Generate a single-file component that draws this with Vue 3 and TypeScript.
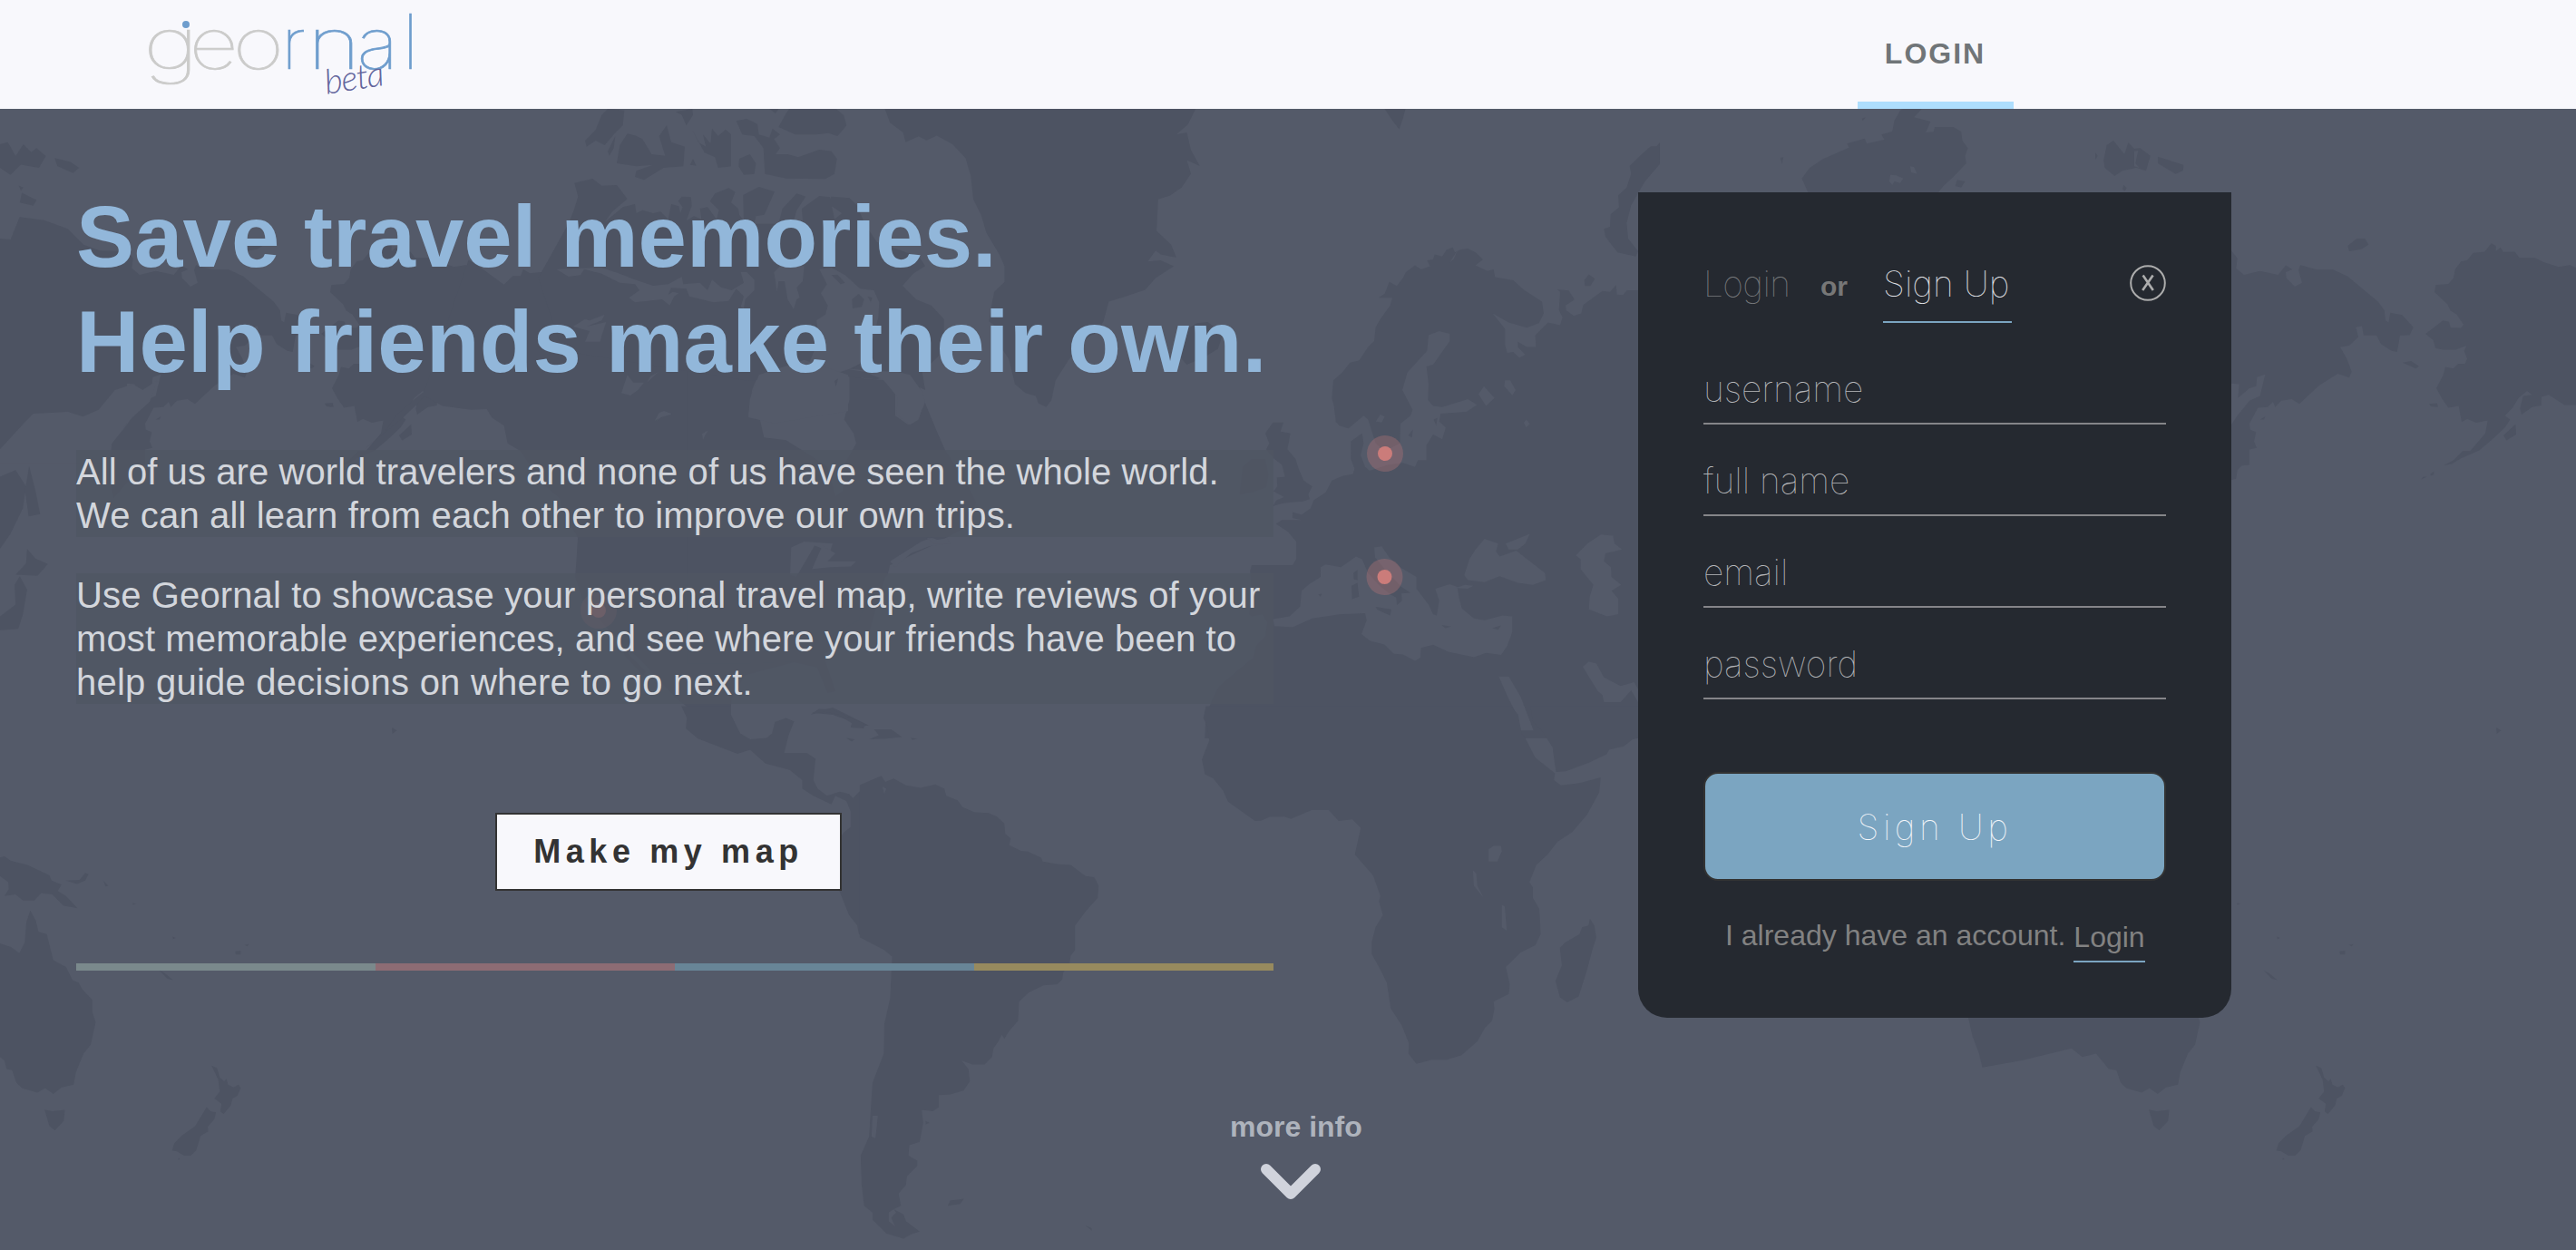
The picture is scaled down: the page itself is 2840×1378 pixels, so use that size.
<script setup lang="ts">
interface Field { name: string; type: string }
interface Patch { id: string; transform: string; land?: string[]; sea?: string[] }
interface Pin { x: number; y: number }
interface Letter { ch: string; x: number; sx: number; sy: number; fill: string }

const fields: Field[] = [
  { name: 'username', type: 'text' },
  { name: 'full name', type: 'text' },
  { name: 'email', type: 'text' },
  { name: 'password', type: 'text' },
]

const letters: Letter[] = [
  { ch: 'g', x: 158, sx: 1.33, sy: 1, fill: '#cbcbca' },
  { ch: 'e', x: 208.5, sx: 1.2, sy: 1, fill: '#cbcbca' },
  { ch: 'o', x: 256.5, sx: 1.24, sy: 1, fill: '#cbcbca' },
  { ch: 'r', x: 310, sx: 1.05, sy: 1, fill: '#6e9dcd' },
  { ch: 'n', x: 339, sx: 1.27, sy: 1, fill: '#6e9dcd' },
  { ch: 'a', x: 393.5, sx: 1.1, sy: 1, fill: '#6e9dcd' },
  { ch: 'l', x: 444, sx: 1, sy: 1.06, fill: '#6e9dcd' },
]

const stripes: string[] = ['#7a898c', '#8d6c74', '#688597', '#978a5e']

const pins: Pin[] = [
  { x: 1527, y: 500 },
  { x: 1526.5, y: 636 },
  { x: 660, y: 673 },
]

// World map, one patch per region; sea shapes are cut out of the land below them.
const patches: Patch[] = [
  {
    id: 'alaska-west',
    transform: 'translate(80 120) scale(.33333 .4337)',
    land: [
      '1322,405 1300,397 1262,402 1215,390 1182,378 1132,378 1118,363 1080,364 1070,352 1055,362 1055,348 1040,342 1018,363 980,366 960,385 940,388 920,408 915,430 898,445 856,448 852,466 895,497 905,513 925,522 948,548 940,557 905,556 900,541 880,538 855,553 822,572 848,588 855,608 880,612 922,612 958,602 950,615 960,635 953,648 930,648 914,660 888,656 880,678 858,710 878,738 898,760 932,755 942,796 960,788 990,798 1028,792 1020,825 970,870 945,870 915,893 882,907 910,902 940,888 1000,868 1040,842 1085,810 1102,790 1085,780 1110,760 1130,735 1158,717 1175,727 1145,730 1135,762 1140,777 1175,758 1205,754 1206,732 1230,727 1282,753 1322,753',
      '1080,830 1120,802 1122,828 1090,843', '834,750 860,748 864,758 840,756', '808,942 815,935 828,935', '838,928 850,922 850,930 840,932',
      '180,360 200,380 196,405 222,422 275,412 335,422 360,398 382,408 360,415 362,430 390,452 414,442 402,410 408,397 460,408 515,408 565,426 610,455 665,490 686,512 690,538 700,543 706,518 745,524 782,555 770,575 738,576 728,618 710,615 675,598 660,576 618,576 612,552 592,555 600,580 570,602 540,605 562,635 578,668 570,683 532,673 470,703 405,750 380,738 345,742 325,758 318,745 300,758 268,760 240,800 242,815 262,822 255,845 264,862 240,866 240,905 215,907 200,918 196,940 180,950 135,990 120,930 130,850 180,803',
      '-240,330 -205,332 -175,275 -94,283 -16,305 36,345 90,360 180,362 180,800 100,865 -240,865',
      '746,645 775,641 800,654 790,660', '565,348 595,330 622,330 634,345 610,357 570,362',
      '275,790 292,782 288,790',
    ],
    sea: [
      '180,698 206,700 202,735 240,710 262,705 265,682 292,675 275,730 240,742 200,780 180,803',
      '-240,865 -162,800 -130,775 -15,770 34,782 86,765 140,715 200,700 232,715 280,690 255,745 190,790 130,850 100,900 -240,900',
    ],
  },
  {
    id: 'siberia-east',
    transform: 'translate(2400 120) scale(.33333 .4337)',
    land: [
      '1322,405 1300,397 1262,402 1215,390 1182,378 1132,378 1118,363 1080,364 1070,352 1055,362 1055,348 1040,342 1018,363 980,366 960,385 940,388 920,408 915,430 898,445 856,448 852,466 895,497 905,513 925,522 948,548 940,557 905,556 900,541 880,538 855,553 822,572 848,588 855,608 880,612 922,612 958,602 950,615 960,635 953,648 930,648 914,660 888,656 880,678 858,710 878,738 898,760 932,755 942,796 960,788 990,798 1028,792 1020,825 970,870 945,870 915,893 882,907 910,902 940,888 1000,868 1040,842 1085,810 1102,790 1085,780 1110,760 1130,735 1158,717 1175,727 1145,730 1135,762 1140,777 1175,758 1205,754 1206,732 1230,727 1282,753 1322,753',
      '1080,830 1120,802 1122,828 1090,843', '834,750 860,748 864,758 840,756', '808,942 815,935 828,935', '838,928 850,922 850,930 840,932',
      '180,360 200,380 196,405 222,422 275,412 335,422 360,398 382,408 360,415 362,430 390,452 414,442 402,410 408,397 460,408 515,408 565,426 610,455 665,490 686,512 690,538 700,543 706,518 745,524 782,555 770,575 738,576 728,618 710,615 675,598 660,576 618,576 612,552 592,555 600,580 570,602 540,605 562,635 578,668 570,683 532,673 470,703 405,750 380,738 345,742 325,758 318,745 300,758 268,760 240,800 242,815 262,822 255,845 264,862 240,866 240,905 215,907 200,918 196,940 180,943',
      '746,645 775,641 800,654 790,660', '565,348 595,330 622,330 634,345 610,357 570,362', '0,138 22,145 20,156 0,163',
      '275,790 292,782 288,790',
    ],
    sea: ['180,698 206,700 202,735 240,710 262,705 265,682 292,675 275,730 240,742 200,780 180,803'],
  },
  {
    id: 'north-america-west',
    transform: 'translate(0 120) scale(.57398 .4337)',
    land: [
      '900,384 930,410 945,425 968,447 985,425 1000,425 1005,408 1018,418 1040,415 1050,393 1072,390 1080,405 1100,425 1600,560 1600,880 1700,1190 1665,1350 1530,1405 1430,1440 1405,1500 1400,1600 1360,1600 1330,1530 1300,1500 1230,1400 1180,1340 1120,1250 1105,1190 1110,1090 1080,1020 1075,990 1040,950 1000,870 975,850 968,805 945,785 935,763 905,765 850,755 815,730 800,752 770,790 700,865 740,820 760,780 790,745 815,718',
      '1190,1340 1210,1390 1240,1430 1235,1440 1200,1390',
      '0,90 15,85 30,120 45,90 60,110 70,100 88,120 75,150 40,142 20,168 0,150', '105,125 135,135 152,150 140,163 110,145', '36,195 45,200 40,208', '42,213 70,232 64,246 38,238',
      '0,935 30,918 50,960 44,1015 20,1080 0,1118', '56,908 68,970 77,1030 55,1036 48,970', '52,1118 68,1143 92,1157 72,1187 30,1184 50,1155', '38,1188 52,1222 44,1285 35,1322 0,1325 0,1290 30,1260 28,1210',
      '624,748 640,748 636,758',
    ],
    sea: [
      '1260,795 1275,768 1290,775 1268,785', '1348,840 1350,820 1360,818 1355,842',
      '1515,1190 1520,1115 1568,1095 1640,1110 1590,1140 1550,1150 1525,1193',
    ],
  },
  {
    id: 'north-america-east',
    transform: 'translate(700 120) scale(.57398 .4337)',
    land: [
      '200,420 420,420 545,700 555,740 580,820 595,865 640,960 655,1000 640,1060 570,1110 490,1160 485,1185 450,1230 430,1300 360,1350 365,1400 385,1480 370,1485 350,1420 300,1405 200,1410 100,1410 100,500',
      '480,0 490,35 515,60 520,85 545,70 560,80 580,68 610,90 635,125 645,170 650,230 665,270 675,315 700,370 710,400 710,440 690,465 685,500 680,540 700,560 700,600 718,635 730,700 750,722 770,730 775,748 790,758 800,740 808,690 825,655 832,640 870,580 885,570 900,540 910,490 940,478 980,460 1000,430 1035,400 1010,385 985,388 1000,360 1010,370 1040,378 1030,345 1002,310 1005,230 1028,220 1050,200 1068,165 1060,130 1085,145 1068,105 1060,60 1040,65 1062,40 1077,0',
      '1040,570 1060,560 1080,545 1100,542 1130,570 1120,610 1095,630 1060,650 1040,620 1055,600',
      '1440,0 1480,0 1475,25 1468,52 1455,30',
      '340,1535 380,1522 450,1568 440,1568 380,1540',
    ],
    sea: [
      '240,665 225,715 218,780 240,790 248,835 290,842 330,875 370,910 385,985 400,970 402,905 425,850 420,825 402,790 412,740 412,670 380,640 290,640',
      '415,660 435,685 480,690 500,720 500,780 525,803 545,790 555,745 545,725 500,680 470,660',
      '298,1185 300,1115 325,1100 380,1105 375,1125 345,1110 330,1145 310,1190', '340,1170 360,1110 385,1130 370,1150 425,1150 415,1163 375,1165',
      '490,1150 550,1100 570,1090 600,1105 565,1112 530,1130 500,1165', '560,1090 575,1105 606,1105 600,1092 580,1095',
    ],
  },
  {
    id: 'arctic-islands',
    transform: 'translate(620 120) scale(.33333)',
    land: [
      '20,380 38,335 52,290 40,245 100,231 130,254 180,252 215,298 165,340 140,375 200,325 240,315 245,345 265,335 300,345 325,340 350,365 360,315 385,322 390,345 398,325 383,305 395,290 425,292 428,320 410,370 435,355 460,365 455,330 480,325 510,365 518,335 488,305 505,280 550,262 572,275 558,310 582,330 585,350 600,370 598,285 650,258 702,274 668,350 640,355 635,380 715,380 728,330 775,280 805,290 775,335 765,370 795,370 792,330 850,288 885,292 900,365 925,345 885,318 888,290 950,295 975,320 1000,380 1040,440 1180,490 1200,520 1160,545 1125,585 1170,630 1220,650 1262,695 1262,800 1190,870 1200,930 1160,910 1110,870 1040,895 940,885 905,915 850,870 620,900 0,800 -80,560',
      '75,105 110,70 130,20 150,0 205,5 200,55 170,85 140,120 110,105 80,125', '150,140 175,90 170,130 155,155',
      '180,180 190,120 215,82 240,88 265,100 295,150 340,155 320,90 345,55 360,110 405,125 400,190 335,195 270,235 240,225 245,205 300,185 245,190', '430,70 450,110 475,125 465,85 490,115 495,65 515,90 540,68 558,85 558,190 515,195 505,160 470,145',
      '575,40 610,33 645,50 650,85 685,95 695,65 720,85 700,100 720,130 705,150 745,150 780,160 850,135 890,140 908,165 900,215 870,232 740,230 670,215 665,130 635,90 595,85', '585,165 620,150 640,180 635,215 600,218 583,190',
      '715,60 740,15 750,0 905,0 930,20 940,55 910,90 880,80 840,85 770,85', '422,185 432,165 443,188', '375,10 430,0 432,20 410,55 395,20', '685,0 715,0 705,15',
    ],
    sea: [
      '-20,530 20,555 60,550 72,530 130,545 190,575 240,580 255,600 220,625 240,640 330,630 355,650 370,620 385,610 365,605 350,615 360,592 410,595 420,620 500,640 550,635 575,595 600,620 590,655 600,660 605,630 635,600 635,565 610,540 590,540 600,575 560,600 525,590 495,565 480,600 455,575 400,580 395,555 350,580 300,585 240,565 190,545 130,525',
      '700,540 710,605 715,570 735,570 745,630 765,662 775,630 785,625 775,590 795,570 800,520 720,520', '850,530 890,525 935,550 985,595 1030,600 1048,640 1045,690 1010,830 950,860 890,880 800,880 850,760 840,700 870,680 878,650 855,610 875,580',
      '940,860 1000,870 1060,895 1110,955 1105,1010 1150,1045 1175,1030 1200,970 1190,935 1150,880 1110,870',
      '650,880 800,830 945,880 945,1000 700,1040 615,1020 620,960', '195,940 215,880 235,905 270,905 250,930 225,948', '280,905 290,885 318,870',
      '35,720 75,695 90,700 140,680 130,700 80,720 145,705 130,750 125,770 75,770 90,735',
      '305,1032 320,1005 335,1000 362,1010 330,1018', '465,1095 462,1075 483,1063 472,1080',
    ],
  },
  {
    id: 'arctic-islets',
    transform: 'translate(620 120) scale(.33333)',
    land: ['958,630 980,612 998,630 990,655 960,660', '1010,620 1025,625 1020,640', '890,550 910,548 935,575 920,580', '900,900 912,892 905,918'],
  },
  {
    id: 'europe',
    transform: 'translate(1380 120) scale(.33333 .4337)',
    land: [
      '45,825 70,797 105,797 95,820 128,825 118,865 145,890 155,915 172,945 200,960 187,980 192,992 170,998 130,1000 100,1003 70,1010 82,995 107,987 72,972 85,960 83,937 110,935 100,905 72,888 48,865 58,850',
      '-30,910 0,890 45,890 55,930 48,962 0,975 -40,980',
      '270,690 300,670 325,645 355,640 385,605 405,590 410,555 425,535 458,500 465,480 420,480 440,470 455,440 480,450 500,430 510,415 540,398 560,408 590,400 580,385 600,383 605,370 630,375 645,358 665,352 672,365 690,358 715,355 740,365 765,383 740,398 780,412 800,408 805,428 865,436 900,460 960,490 966,520 950,545 910,556 850,543 797,520 838,560 838,600 845,620 865,618 885,633 905,625 880,605 880,592 910,605 940,605 938,575 980,543 1020,550 1028,530 1016,512 1020,465 1010,459 1048,462 1068,485 1038,500 1040,512 1065,526 1090,520 1097,498 1160,463 1185,465 1205,448 1208,472 1228,473 1240,462 1320,460 1320,1600 -155,1600 -152,1545 -130,1500 -108,1468 -50,1430 5,1395 15,1365 45,1340 52,1305 35,1285 0,1290 -8,1285 0,1230 -5,1175 0,1160 135,1160 147,1145 147,1100 120,1075 80,1055 100,1045 165,1045 135,1040 135,1025 165,1032 195,1015 205,995 245,975 265,945 300,933 335,928 340,915 328,890 328,845 365,825 370,850 360,880 375,910 390,920 450,905 500,900 540,910 550,893 578,893 578,855 600,828 630,840 642,810 620,795 625,775 710,770 745,752 715,738 630,758 600,755 583,740 585,700 578,655 600,650 655,590 655,572 620,565 585,575 580,615 515,670 498,715 532,765 525,780 492,800 490,850 440,870 410,850 385,790 370,780 320,812 290,805 278,795 272,755 265,735',
      '1165,305 1185,300 1187,268 1215,250 1212,220 1240,200 1255,165 1250,145 1270,130 1290,115 1320,95 1340,95 1350,85 1350,140 1300,185 1255,245 1240,290 1245,330 1278,362 1270,375 1210,365 1170,325',
      '1100,435 1115,421 1135,432 1120,450 1102,450',
    ],
    sea: [
      '70,1297 75,1315 135,1318 200,1295 290,1285 375,1282 380,1300 363,1335 390,1352 440,1362 470,1385 500,1387 540,1403 558,1395 560,1370 600,1362 650,1380 735,1394 775,1383 825,1388 845,1365 862,1330 862,1290 830,1288 770,1300 735,1295 695,1270 685,1240 680,1215 655,1208 607,1220 620,1250 612,1288 600,1285 585,1260 545,1220 545,1190 490,1165 455,1140 430,1112 405,1115 408,1140 440,1170 495,1215 525,1230 495,1232 497,1250 480,1262 478,1242 460,1235 420,1210 385,1180 365,1145 345,1138 295,1165 245,1158 228,1165 228,1190 190,1208 165,1225 160,1265 125,1290',
      '703,1185 720,1145 740,1120 770,1093 815,1105 808,1125 820,1138 875,1123 920,1150 970,1180 973,1198 930,1210 880,1205 820,1188 770,1203 715,1198', '840,1105 920,1080 905,1105 880,1120 850,1120', '673,1218 705,1210 733,1212 715,1220',
      '1072,1135 1110,1105 1155,1082 1195,1085 1200,1105 1225,1120 1170,1130 1165,1150 1188,1165 1190,1190 1222,1210 1190,1225 1212,1245 1212,1285 1175,1290 1115,1272 1118,1240 1130,1210 1088,1170 1088,1145',
      '750,725 768,705 803,735 775,755', '838,690 855,690 873,715 862,728 835,705', '900,798 908,790 920,800 908,810', '410,795 425,777 440,782 430,797',
      '1095,1418 1115,1405 1140,1410 1165,1445 1220,1467 1265,1457 1278,1475 1278,1508 1255,1478 1220,1508 1165,1508 1160,1490 1145,1480 1120,1450',
      '817,1443 850,1443 890,1495 932,1580 888,1580 880,1545 850,1500',
      '655,390 680,360 668,382',
    ],
  },
  {
    id: 'mediterranean-islands',
    transform: 'translate(1380 120) scale(.33333 .4337)',
    land: ['410,1266 462,1272 458,1288 415,1273', '330,1212 350,1205 355,1240 332,1246', '336,1180 350,1172 350,1198 338,1196', '628,1312 660,1316 640,1320', '795,1320 825,1313 815,1324', '518,830 533,815 530,835', '602,790 614,785 610,805', '220,1235 232,1232 228,1240', '550,747 558,750', '110,780 105,795'],
  },
  {
    id: 'siberia-north',
    transform: 'translate(1800 0) scale(.4337 .33333)',
    land: [
      '447,640 430,590 450,555 485,525 550,488 545,475 590,458 595,475 640,462 632,445 660,435 665,400 680,365 690,358 735,360 715,388 757,402 745,438 765,436 768,420 815,420 835,435 838,465 852,490 845,515 848,540 815,585 790,615 775,640',
      '1197,530 1205,480 1222,465 1250,510 1260,472 1275,492 1290,490 1316,515 1305,565 1280,555 1245,565 1225,582 1200,555', '1335,518 1400,545 1398,565 1380,575 1335,540', '825,595 845,600 835,620 820,615', '1248,612 1256,622 1250,632 1245,625', '375,522 383,520 380,542', '583,392 592,388 585,400', '1176,505 1182,515 1176,528',
    ],
    sea: ['655,578 670,580 688,590 680,605 665,600 660,612 652,600', '705,550 715,552 723,575 708,570', '1275,500 1285,498 1278,540 1288,555 1275,550'],
  },
  {
    id: 'central-america',
    transform: 'translate(0 780) scale(.60587 .38138)',
    land: [
      '1240,-4 1250,30 1248,60 1270,90 1342,134 1365,122 1393,162 1437,180 1460,210 1460,235 1480,255 1513,280 1520,255 1540,270 1548,300 1548,345 1535,362 1520,400 1510,440 1518,500 1528,532 1545,600 1560,630 1563,655 1575,667 1575,225 1552,262 1545,250 1528,243 1505,255 1488,235 1480,210 1484,148 1468,131 1427,131 1435,80 1445,40 1430,30 1410,42 1405,75 1395,88 1365,92 1347,75 1330,20 1330,-4',
      '1475,20 1490,4 1515,5 1540,25 1572,45 1572,60 1548,58 1550,45 1525,20 1500,12', '1540,88 1555,92 1550,98',
      '0,682 20,692 35,710 45,680 48,620 55,587 65,615 70,648 85,655 97,730 120,750 132,788 143,795 150,815 168,845 168,880 174,910 165,975 152,1000 138,1055 134,1090 112,1098 97,1117 82,1100 68,1113 40,1100 30,1085 22,1048 12,1045 8,1020 0,1010',
      '0,433 8,430 20,443 50,455 90,485 94,500 112,512 105,530 120,545 141,580 115,572 95,540 75,536 62,558 42,558 28,540 8,545 16,525 15,505 0,487',
      '81,1162 95,1167 118,1163 116,1195 100,1222 90,1210', '120,500 145,498 155,478 161,482 155,500 140,510', '188,500 197,515 192,517',
    ],
  },
  {
    id: 'south-atlantic',
    transform: 'translate(950 780) scale(.54209 .38138)',
    land: [
      '-4,224 40,197 48,215 65,205 90,225 120,232 150,222 168,235 172,255 195,268 205,288 230,303 258,305 275,315 290,335 292,365 303,378 300,398 325,415 338,416 365,434 368,445 400,453 425,455 455,487 473,490 482,515 480,550 457,587 434,630 434,700 425,718 422,745 410,765 408,785 398,800 370,803 340,823 320,850 318,905 300,935 290,958 285,945 278,965 268,985 265,1010 250,1032 225,1032 203,1020 217,1045 220,1080 207,1107 180,1118 157,1120 157,1155 145,1167 122,1163 125,1200 118,1255 97,1265 95,1295 113,1310 113,1325 92,1355 90,1380 75,1405 80,1440 65,1450 85,1465 90,1485 118,1515 100,1523 85,1535 50,1520 22,1480 22,1460 5,1440 0,1380 -2,1295 15,1240 22,1085 45,1000 46,915 58,840 62,720 45,700 -4,664',
      '700,-4 695,30 703,55 707,95 692,150 698,193 715,205 735,240 745,272 800,328 812,327 830,316 860,315 873,322 915,296 950,296 970,328 998,323 1015,348 1003,425 1040,485 1055,545 1052,560 1060,600 1045,635 1037,680 1037,712 1052,750 1068,795 1076,870 1098,918 1113,970 1112,1000 1128,1030 1160,1018 1190,1018 1220,1005 1252,965 1268,925 1282,905 1287,870 1285,850 1316,828 1318,800 1310,750 1340,708 1370,687 1381,655 1378,582 1365,550 1365,520 1358,505 1372,455 1395,425 1415,388 1445,360 1475,310 1500,245 1503,202 1460,218 1422,225 1408,210 1410,190 1370,145 1350,90 1342,75 1335,20 1320,-4',
      '1360,-4 1365,40 1385,70 1405,115 1412,186 1432,184 1478,160 1515,135 1520,122 1550,112 1568,92 1590,85 1590,-4',
      '1481,610 1490,630 1494,665 1486,700 1475,760 1458,835 1435,852 1420,838 1411,790 1424,745 1420,695 1430,680 1460,655 1465,635 1478,630',
      '25,63 60,63 82,85 50,90 15,92 35,80', '100,88 113,90 103,94', '180,1425 208,1420 200,1435 175,1440', '455,1497 468,1505 468,1512', '130,1195 138,1200 130,1205', '0,45 10,52 0,58',
    ],
    sea: ['1275,445 1275,410 1285,400 1300,400 1302,415 1293,445', '1243,470 1250,480 1252,515 1265,550 1245,515', '1302,570 1308,575 1312,645 1302,635', '55,1460 65,1450 70,1460 60,1475 68,1500 55,1485', '22,1180 33,1180 28,1245 20,1240', '42,228 50,235 46,250'],
  },
  {
    id: 'australia-east-copy',
    transform: 'translate(2320 780) scale(.60587 .38138)',
    land: ['-250,880 -240,950 -228,1000 -222,1040 -150,1020 -60,985 -40,1010 -15,1000 8,1045 22,1048 30,1085 40,1100 68,1113 82,1100 97,1117 112,1098 134,1090 138,1055 152,1000 165,975 174,910 168,880', '81,1162 95,1167 118,1163 116,1195 100,1222 90,1210'],
  },
  ...[0, 2320].map((dx): Patch => ({
    id: `pacific-${dx}`,
    transform: `translate(${dx} 780) scale(.60587 .38138)`,
    land: [
      '385,1035 395,1042 400,1070 408,1080 412,1073 415,1090 425,1098 434,1090 438,1100 432,1122 423,1130 420,1150 407,1175 401,1168 403,1145 390,1130 400,1110 397,1075',
      '376,1155 383,1167 393,1170 390,1190 378,1212 379,1225 365,1238 357,1280 347,1295 335,1295 322,1283 313,1280 317,1260 330,1238 355,1210',
      '713,58 722,66 714,76', '428,705 438,703 438,714 429,714', '445,686 453,684 450,690', '290,760 300,768 315,788 305,784', '314,662 320,666 315,669', '241,565 248,568 242,570', '252,553 255,558', '325,1302 328,1306 324,1307', '260,581 264,585', '215,542 219,545',
    ],
  })),
]
</script>

<template>
  <div class="page">
    <header class="topbar">
      <a class="brand" aria-label="geornal beta">
        <svg width="320" height="120" viewBox="140 0 320 120">
          <text
            v-for="l in letters" :key="l.ch" class="logo-letter" :fill="l.fill" :stroke="l.fill"
            :transform="`translate(${l.x} 76) scale(${l.sx} ${l.sy})`"
          >{{ l.ch }}</text>
          <circle cx="205" cy="27" r="4" fill="#6e9dcd" />
          <text class="logo-beta" x="0" y="0" transform="translate(360 104) rotate(-9)">beta</text>
        </svg>
      </a>
      <a class="nav-login">LOGIN</a>
    </header>

    <main class="hero">
      <svg class="map" width="2840" height="1258" viewBox="0 120 2840 1258" aria-hidden="true">
        <g v-for="p in patches" :key="p.id" :transform="p.transform">
          <polygon v-for="(s, i) in p.land" :key="'l' + i" class="land" :points="s" />
          <polygon v-for="(s, i) in p.sea" :key="'s' + i" class="sea" :points="s" />
        </g>
        <g v-for="(pin, i) in pins" :key="i" fill="#cb7c7a">
          <circle :cx="pin.x" :cy="pin.y" r="20" opacity=".3" />
          <circle :cx="pin.x" :cy="pin.y" r="8" />
        </g>
      </svg>

      <section class="pitch">
        <h1><span class="l1">Save travel memories.</span><br><span class="l2">Help friends make their own.</span></h1>
        <p><span class="p1">All of us are world travelers and none of us have seen the whole world.</span><br><span class="p2">We can all learn from each other to improve our own trips.</span></p>
        <p><span class="p3">Use Geornal to showcase your personal travel map, write reviews of your</span><br><span class="p4">most memorable experiences, and see where your friends have been to</span><br><span class="p5">help guide decisions on where to go next.</span></p>
        <button class="cta" type="button">Make my map</button>
        <div class="stripes"><i v-for="c in stripes" :key="c" :style="{ background: c }" /></div>
      </section>

      <form class="card">
        <div class="tabs">
          <span class="tab dim">Login</span>
          <span class="or">or</span>
          <span class="tab active">Sign Up</span>
          <svg class="close" width="40" height="40" viewBox="0 0 40 40" fill="none" stroke="#adadad">
            <circle cx="20" cy="20" r="18.8" stroke-width="2" />
            <path d="M14.6 11.5 25.8 28M25.6 11.5 14.2 28" stroke-width="2.6" />
          </svg>
        </div>
        <input v-for="f in fields" :key="f.name" :type="f.type" :placeholder="f.name">
        <button class="submit" type="button">Sign Up</button>
        <div class="foot"><span>I already have an account.</span><a>Login</a></div>
      </form>

      <a class="more">
        <span>more info</span>
        <svg width="68" height="42" viewBox="0 0 68 42" fill="none" stroke="#d0d3dc" stroke-width="12" stroke-linecap="round" stroke-linejoin="round">
          <path d="M8 7 35 34 62 7" />
        </svg>
      </a>
    </main>
  </div>
</template>

<style>
body { background: #545a69; overflow: hidden; }
</style>

<style scoped>
* { box-sizing: border-box; }
.page { width: 2840px; height: 1378px; overflow: hidden; font-family: "Liberation Sans", Arial, sans-serif; background: #545a69; }
.topbar { height: 120px; background: #f8f8fc; display: flex; padding-left: 140px; }
.brand { width: 1908px; height: 120px; }
.brand svg { display: block; }
.logo-letter { font: 100 79px Inter, sans-serif; stroke-width: .7px; }
.logo-beta { font: italic 300 38px Lato, sans-serif; fill: #63659c; letter-spacing: -1px; }
.nav-login { width: 172px; height: 120px; border-bottom: 8px solid #aedefd; text-align: center; color: #707578; font-weight: 700; font-size: 32px; letter-spacing: 2px; line-height: 118px; padding-right: 1px; }
.hero { position: relative; height: 1258px; display: grid; grid-template-columns: 1404px 1fr; grid-template-rows: 1100px 1fr; isolation: isolate; }
.map { position: absolute; inset: 0; z-index: -1; }
.land { fill: #4d5362; }
.sea { fill: #545a69; }
.pitch { padding: 83px 0 0 84px; }
h1 { margin: 0; font-size: 96px; line-height: 116px; font-weight: 700; color: #92b7da; white-space: nowrap; }
.l1 { letter-spacing: .04px; }
.l2 { letter-spacing: .2px; }
p { margin: 0 0 40px; font-size: 40px; line-height: 48px; color: #d3d6dc; background: rgba(80, 86, 99, .77); white-space: nowrap; }
h1 + p { margin-top: 61px; }
.p1 { letter-spacing: .08px; }
.p2 { letter-spacing: .15px; }
.p3 { letter-spacing: .13px; }
.p4 { letter-spacing: .11px; }
.p5 { letter-spacing: .24px; }
.cta { display: block; margin: 120px 0 80px 462px; width: 382px; height: 86px; padding: 0; border: 2px solid #333; background: #f8f8fc; color: #333; font: 700 36px "Liberation Sans", Arial, sans-serif; letter-spacing: 5.6px; }
.stripes { display: flex; height: 8px; }
.stripes i { flex: 1; }
.card { margin: 92px 0 0 402px; width: 654px; height: 910px; padding: 80px 72px 0; background: #252930; border-radius: 0 0 32px 32px; }
.tabs { display: flex; height: 84px; white-space: nowrap; }
.tab { font: 100 39px/42px Inter, sans-serif; height: 64px; }
.dim { color: #77797c; width: 129px; letter-spacing: -.6px; }
.or { width: 69px; font-weight: 700; font-size: 30px; line-height: 44px; padding-top: 2px; color: #777; }
.active { color: #e4e5ea; border-bottom: 2px solid #7ba5c1; width: 142px; }
.close { margin-left: auto; }
input { display: block; width: 510px; height: 76px; margin: 0 0 25px; padding: 0 0 2px; border: 0; border-bottom: 2px solid #858589; background: none; outline: 0; font: 100 39px Inter, sans-serif; border-radius: 0; }
.tabs + input { margin-top: 16px; }
input::placeholder { color: #b4b5b8; opacity: 1; }
.submit { display: block; width: 510px; height: 120px; margin: 80px 0 0; border: 2px solid #333; border-radius: 16px; background: #7ba5c1; color: #f4f6fa; font: 100 39px Inter, sans-serif; letter-spacing: 4.5px; }
.foot { display: flex; align-items: flex-start; margin: 37px 0 0 24px; font-size: 32px; line-height: 46px; color: #828282; white-space: nowrap; }
.foot a { margin-left: 9px; margin-top: 2px; border-bottom: 2px solid #7ba5c1; height: 51px; }
.more { grid-column: 1 / -1; margin-left: 1356px; width: 150px; display: flex; flex-direction: column; color: #aeb3bc; font-weight: 700; font-size: 32px; line-height: 44px; white-space: nowrap; }
.more svg { margin: 18px 0 0 32px; }
</style>
